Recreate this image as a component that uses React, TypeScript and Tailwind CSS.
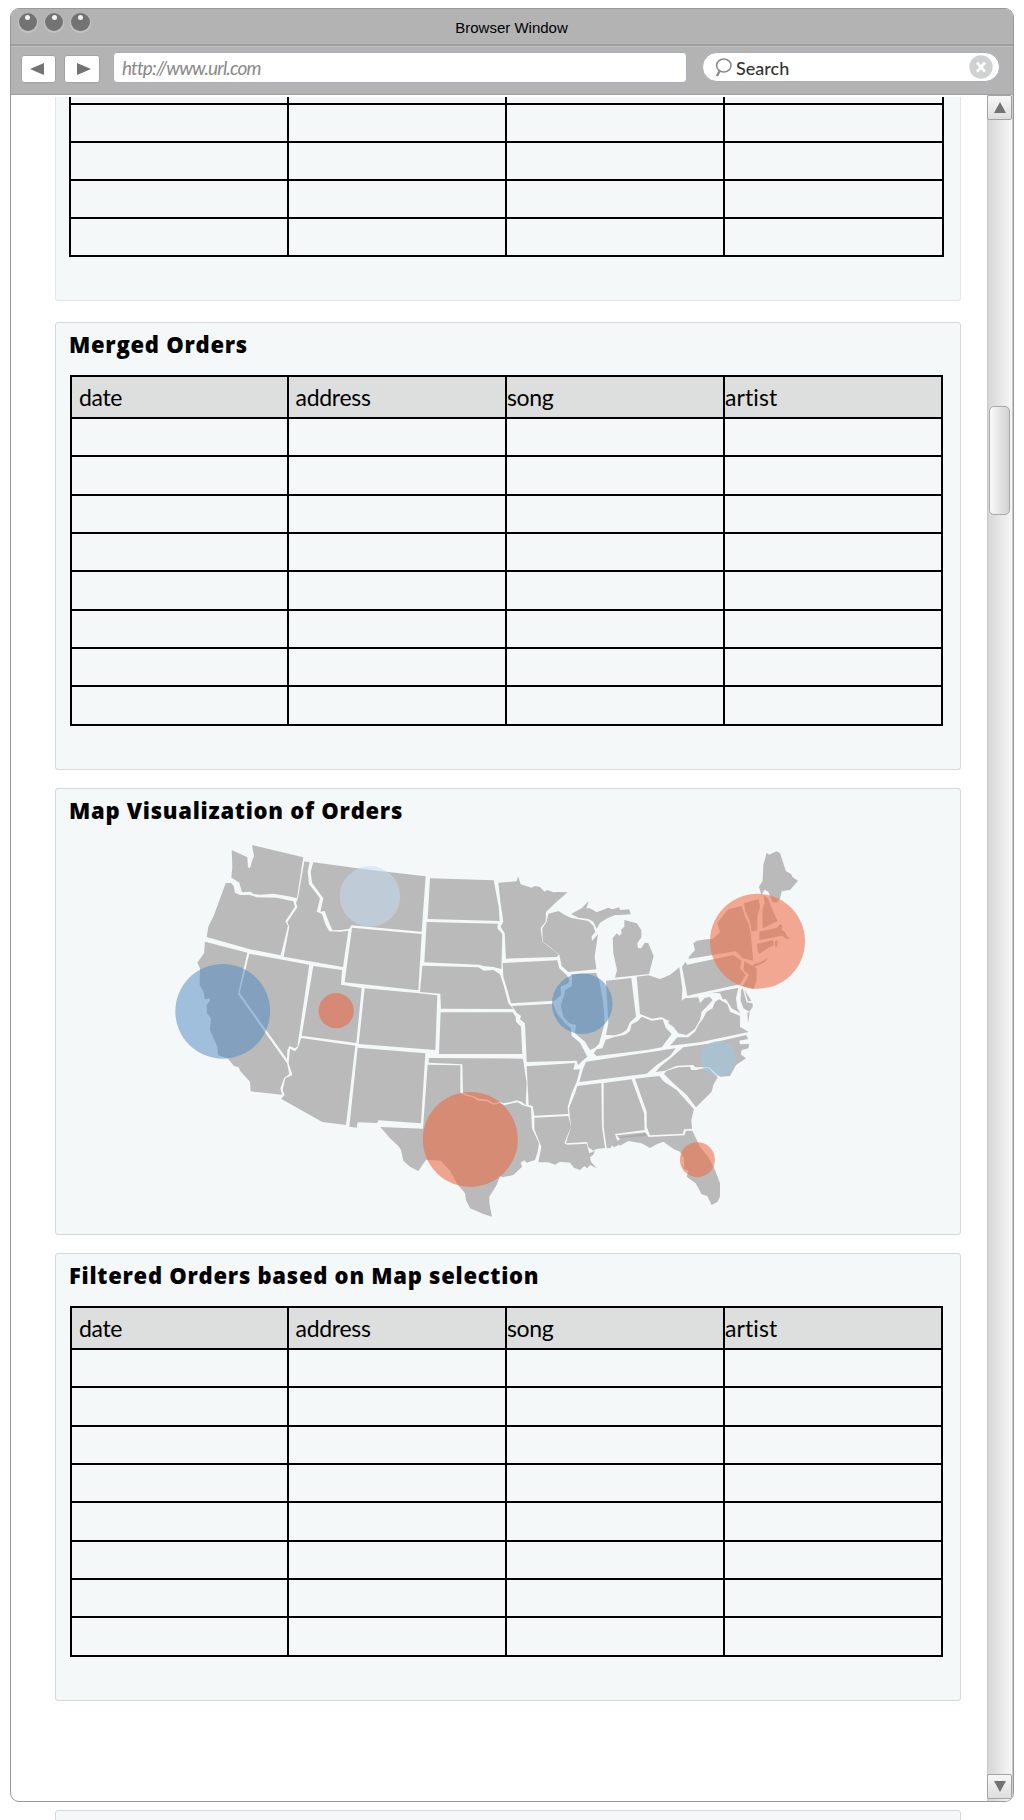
import React from "react";

const WEST = [
  "M215,60 L262,82 L264,112 L270,115 L277,90 L282,78 L276,45 L430,82 L425,112 L411,205 L385,199 L340,191 L300,194 L280,192 L272,185 L246,187 L238,158 L222,148 L214,143 L217,110Z",
  "M197,160 L212,158 L221,168 L225,188 L240,195 L270,195 L290,202 L350,203 L400,214 L405,230 L376,274 L384,288 L362,376 L270,358 L140,321 L145,290 L162,255Z",
  "M433,94 L449,97 L443,125 L447,162 L480,205 L470,245 L486,252 L497,285 L508,304 L540,305 L565,302 L549,411 L371,380 L388,290 L382,277 L412,232 L408,218 L414,205Z",
  "M460,97 L615,118 L797,139 L785,305 L574,286 L568,296 L545,300 L518,301 L510,285 L494,243 L481,245 L490,205 L456,158 L452,125Z",
  "M135,335 L262,368 L234,492 L381,700 L388,732 L372,745 L361,775 L366,794 L272,784 L270,755 L240,722 L236,712 L222,708 L203,685 L174,676 L172,650 L150,600 L153,565 L141,550 L140,525 L150,512 L148,505 L135,508 L130,485 L119,465 L120,415 L112,398 L132,370Z",
  "M268,371 L448,404 L412,650 L405,655 L388,648 L382,660 L381,688 L239,489Z",
  "M460,408 L546,420 L543,464 L605,474 L589,639 L425,617Z",
  "M424,624 L586,647 L558,885 L487,876 L363,806 L374,795 L368,780 L376,745 L397,735 L386,700 L390,656 L405,664 L413,655Z",
];
const PLAINS = [
  "M36,293 L245,312 L235,481 L14,457Z",
  "M74,475 L237,490 L292,496 L286,660 L56,642Z",
  "M53,653 L256,670 L243,880 L115,871 L112,879 L53,877 L50,893 L28,890Z",
  "M270,145 L461,151 L476,230 L479,273 L263,267Z",
  "M260,276 L474,281 L472,295 L487,312 L484,417 L460,411 L430,408 L418,404 L253,397Z",
  "M247,407 L415,412 L432,422 L460,420 L480,433 L492,470 L505,520 L520,537 L303,536 L301,491 L240,486Z",
  "M302,547 L518,547 L527,560 L528,575 L543,590 L547,672 L297,672Z",
  "M267,684 L549,686 L560,760 L557,826 L545,815 L530,811 L510,817 L490,820 L478,815 L460,820 L440,808 L418,806 L400,798 L385,795 L369,788 L367,703 L266,698Z",
  "M263,704 L361,706 L361,790 L380,798 L398,802 L415,812 L440,814 L460,824 L480,820 L493,826 L512,821 L532,817 L548,826 L573,833 L576,895 L597,940 L593,965 L585,990 L560,998 L553,991 L542,998 L546,1010 L520,1035 L487,1042 L480,1038 L470,1065 L448,1100 L448,1120 L456,1160 L430,1152 L390,1135 L378,1110 L375,1090 L350,1060 L330,1022 L302,992 L258,989 L235,1023 L210,1010 L190,992 L183,960 L175,948 L150,925 L121,891 L249,896Z",
  "M475,158 L530,154 L534,139 L542,163 L575,173 L585,168 L600,171 L614,185 L622,180 L640,187 L655,186 L683,187 L650,215 L618,246 L617,275 L602,293 L607,335 L640,360 L656,374 L650,381 L498,386 L494,310 L482,290 L490,275 L482,220Z",
];
const CENTRAL = [
  "M8,309 L172,301 L178,325 L200,345 L208,358 L205,370 L182,380 L183,405 L165,422 L33,430 L22,390 L10,350Z",
  "M36,438 L160,431 L170,460 L200,495 L212,503 L215,527 L240,548 L262,590 L246,604 L234,616 L230,602 L80,606 L75,490 L60,478 L63,468 L50,458Z",
  "M80,619 L225,609 L220,629 L240,628 L230,665 L215,700 L203,740 L205,762 L103,767 L98,738 L86,735Z",
  "M103,773 L205,768 L213,800 L193,850 L202,854 L260,851 L268,880 L285,872 L280,884 L270,892 L273,905 L290,925 L270,915 L262,925 L253,918 L240,930 L222,923 L210,908 L180,905 L165,914 L145,907 L115,907 L124,860 L103,808Z",
  "M145,161 L175,153 L200,168 L215,174 L265,183 L280,197 L286,217 L275,228 L276,243 L294,222 L284,290 L289,328 L205,336 L185,318 L178,285 L150,260 L128,245 L127,205 L140,185Z",
  "M213,162 L245,145 L266,123 L259,145 L270,145 L290,157 L325,143 L337,148 L358,142 L360,150 L388,148 L392,163 L360,165 L345,165 L322,175 L300,188 L290,206 L280,185 L265,177 L235,173Z",
  "M373,180 L410,190 L424,210 L424,232 L412,250 L414,264 L424,265 L434,248 L445,250 L461,288 L447,342 L345,353 L351,330 L340,280 L338,235 L350,220 L358,227 L365,220 L363,209 L373,200Z",
  "M212,343 L288,338 L298,362 L310,430 L314,490 L303,530 L297,552 L285,563 L270,570 L255,545 L225,520 L228,495 L208,490 L190,470 L182,435 L193,405 L195,390 L215,378 L217,355Z",
  "M318,362 L394,354 L408,470 L390,487 L380,509 L365,520 L345,526 L318,525 L325,490Z",
  "M410,350 L445,346 L480,357 L510,345 L538,322 L547,385 L545,425 L520,450 L515,465 L505,482 L485,472 L455,476 L420,462Z",
  "M290,588 L281,580 L290,568 L307,565 L317,539 L343,531 L375,524 L390,513 L395,493 L413,484 L425,470 L455,482 L488,478 L497,503 L515,522 L485,562 L440,570Z",
  "M258,605 L527,565 L510,588 L470,615 L440,641 L238,666 L248,630Z",
  "M232,678 L304,669 L306,800 L315,864 L290,867 L280,872 L265,862 L262,846 L198,850 L213,800 L207,745 L225,700Z",
  "M311,669 L395,658 L432,760 L434,810 L345,822 L356,855 L342,862 L336,856 L332,864 L320,865 L311,800Z",
  "M405,656 L478,648 L492,665 L530,690 L582,748 L574,780 L576,806 L552,808 L548,821 L450,826 L440,800 L440,755Z",
  "M350,826 L436,817 L446,831 L553,826 L558,812 L577,812 L600,860 L625,890 L645,930 L660,970 L660,1010 L652,1026 L635,1035 L622,1008 L605,1003 L587,970 L560,950 L566,932 L552,926 L552,895 L540,875 L522,868 L490,845 L470,853 L450,864 L425,850 L385,843 L360,857 L345,845 L360,838Z",
];
const EAST = [
  "M72,702 L80,692 L115,682 L150,680 L154,690 L168,690 L190,685 L205,684 L233,712 L220,735 L215,755 L168,802 L140,765 L100,730Z",
  "M47,696 L60,680 L95,652 L130,622 L205,611 L318,585 L325,597 L298,602 L300,613 L328,612 L325,625 L305,630 L302,643 L318,655 L288,675 L270,708 L240,710 L207,682 L165,682 L160,675 L110,677 L75,692Z",
  "M90,617 L112,592 L145,592 L165,575 L175,555 L188,538 L200,515 L218,505 L225,486 L237,478 L262,492 L270,515 L300,528 L300,560 L326,576 L180,607Z",
  "M85,550 L90,525 L105,500 L128,480 L135,475 L175,472 L180,490 L193,475 L208,470 L218,480 L200,500 L185,515 L180,540 L164,567 L140,585 L115,580 L100,560Z",
  "M126,380 L136,366 L142,374 L280,345 L305,362 L300,385 L317,405 L300,433 L142,467Z",
  "M160,310 L170,302 L200,298 L218,297 L240,277 L232,250 L248,228 L265,208 L305,198 L315,230 L325,248 L332,280 L340,362 L308,355 L287,334 L200,348 L145,357 L148,349 L165,330Z",
  "M338,374 L365,365 L386,351 L374,367 L343,381Z",
  "M200,463 L295,443 L288,475 L292,505 L302,520 L275,505 L258,478 L248,478 L240,460 L220,458Z",
  "M303,450 L308,445 L320,487 L338,490 L338,502 L328,515 L310,505 L302,482Z",
  "M313,447 L320,460 L334,483 L324,484Z",
  "M322,520 L329,515 L324,550Z",
  "M313,363 L350,385 L350,420 L341,447 L308,438 L327,405 L310,390Z",
  "M312,190 L356,177 L360,200 L352,233 L352,271 L335,275 L328,238 L316,215Z",
  "M370,165 L384,175 L400,215 L413,244 L368,265 L367,210 L374,185Z",
  "M380,38 L387,44 L410,34 L420,40 L438,94 L453,102 L458,112 L474,122 L450,150 L425,154 L420,176 L410,188 L397,187 L385,155 L374,149 L364,165 L357,140 L368,122 L370,75Z",
  "M358,275 L410,264 L420,252 L427,257 L425,270 L435,275 L442,290 L453,293 L440,298 L428,287 L410,290 L358,301Z",
  "M350,312 L398,300 L402,316 L378,328 L358,342 L354,335Z",
  "M404,304 L411,300 L413,315 L407,323Z",
];
const MAP_GROUPS = [
  { at: "translate(160 830) scale(0.33333)", states: WEST },
  { at: "translate(340 830) scale(0.33333)", states: PLAINS },
  { at: "translate(500 860) scale(0.33333)", states: CENTRAL },
  { at: "translate(640 840) scale(0.33333)", states: EAST },
];
const BUBBLES = [
  { x: 222.7, y: 1011.3, r: 47.4, fill: "#508bc1", o: 0.52 },
  { x: 370, y: 896.4, r: 30.3, fill: "#c4dcf1", o: 0.5 },
  { x: 336.2, y: 1010.7, r: 17.6, fill: "#e66a48", o: 0.62 },
  { x: 582.2, y: 1003.7, r: 30.3, fill: "#508bc1", o: 0.55 },
  { x: 470.3, y: 1139.4, r: 47.5, fill: "#ea6d48", o: 0.6 },
  { x: 757.5, y: 941.3, r: 47.5, fill: "#ee714b", o: 0.6 },
  { x: 718.4, y: 1058.4, r: 17.5, fill: "#9acae6", o: 0.5 },
  { x: 697.4, y: 1159.7, r: 17.5, fill: "#ec6f49", o: 0.6 },
];

function OrdersMap() {
  return (
    <svg className="block h-[400px] w-[680px]" viewBox="160 830 680 400">
      {MAP_GROUPS.map((g) => (
        <g key={g.at} transform={g.at} fill="#bababa" strokeLinejoin="round">
          {g.states.map((d) => (
            <path key={d} d={d} />
          ))}
        </g>
      ))}
      <path d="M618 1137.2 L646 1133.3 V1136 L620 1138Z" fill="#a9a9a9" />
      {BUBBLES.map((b) => (
        <circle key={b.x} cx={b.x} cy={b.y} r={b.r} fill={b.fill} fillOpacity={b.o} />
      ))}
    </svg>
  );
}

const HEADERS = [
  { label: "date", cls: "pl-[7px] tracking-[-0.35px]" },
  { label: "address", cls: "pl-[6.5px] tracking-[-0.3px]" },
  { label: "song", cls: "pl-0 tracking-[-0.35px]" },
  { label: "artist", cls: "pl-0 tracking-[0.1px]" },
];

function Rows({ count }: { count: number }) {
  return (
    <>
      {Array.from({ length: count * 4 }, (_, i) => (
        <div key={i} className="border-r-2 border-b-2 border-black" />
      ))}
    </>
  );
}

function OrdersTable() {
  return (
    <div className="grid w-[873px] grid-cols-[217px_218px_218px_218px] grid-rows-[42px_repeat(8,38.35px)] border-t-2 border-l-2 border-black">
      {HEADERS.map((h) => (
        <div
          key={h.label}
          className={`border-r-2 border-b-2 border-black bg-[#dddfde] pt-[6px] text-[23px] leading-[28px] ${h.cls}`}
        >
          {h.label}
        </div>
      ))}
      <Rows count={8} />
    </div>
  );
}

function Panel({ title, cls, children }: { title: string; cls: string; children: React.ReactNode }) {
  return (
    <section className={`ml-[44px] w-[906px] shrink-0 rounded-[3px] border border-[#d5d9d9] bg-[#f4f8f9] pl-[14px] ${cls}`}>
      <h2 className="-ml-px h-[52px] pt-[6px] font-['Open_Sans',sans-serif] text-[22px] leading-[30px] font-extrabold tracking-[0.74px] whitespace-nowrap">
        {title}
      </h2>
      {children}
    </section>
  );
}

function ScrollButton({ down }: { down?: boolean }) {
  return (
    <div className="flex h-[25px] w-[25px] shrink-0 items-center justify-center rounded-[2px] border border-[#a3a3a3] bg-gradient-to-b from-[#f7f7f7] to-[#dedede]">
      <svg className="h-[11px] w-[12px]" viewBox="0 0 12 11">
        <path d={down ? "M0 0H12L6 11Z" : "M6 0L12 11H0Z"} fill="#737373" />
      </svg>
    </div>
  );
}

function NavButton({ d, cls }: { d: string; cls: string }) {
  return (
    <div className={`flex h-[28px] items-center justify-center rounded-[3px] border border-[#a3a3a3] bg-white ${cls}`}>
      <svg className="h-[12px] w-[14px]" viewBox="0 0 14 12">
        <path d={d} fill="#737373" />
      </svg>
    </div>
  );
}

export default function App() {
  return (
    <div className="flex h-[1820px] w-[1024px] flex-col overflow-hidden bg-white pt-[8px] pl-[10px] font-['Lato',sans-serif] text-black">
      <div className="flex h-[1794px] w-[1004px] shrink-0 flex-col overflow-hidden rounded-[9px] border border-[#999999] bg-white">
        <div className="grid h-[37px] shrink-0 grid-cols-[1fr_auto_1fr] border-b-2 border-[#9e9e9e] bg-[#b3b3b3]">
          <div className="flex gap-[8px] pt-[4px] pl-[7.5px]">
            {[0, 1, 2].map((i) => (
              <div key={i} className="flex h-[17.5px] w-[18.4px] justify-center rounded-full bg-[#737373] pt-[2px] shadow-[0_1px_1px_1px_#c4c4c4]">
                <span className="h-[5px] w-[5px] rounded-full bg-[#f2f2f2]" />
              </div>
            ))}
          </div>
          <div className="pt-[10px] pr-[1px] font-['Liberation_Sans',sans-serif] text-[15px] leading-[18px]">Browser Window</div>
        </div>
        <div className="flex h-[49px] shrink-0 border-t border-b border-t-[#c2c2c2] border-b-[#a0a0a0] bg-[#b3b3b3] pl-[10px]">
          <NavButton cls="mt-[8px] w-[35px] pr-[3px]" d="M0 6L14 0V12Z" />
          <NavButton cls="mt-[8px] ml-[8px] w-[36px] pl-[3px]" d="M14 6L0 0V12Z" />
          <div className="mt-[5px] ml-[13px] h-[31px] w-[574px] rounded-[4px] border border-[#a9afba] bg-white pl-[8px] text-[19px] leading-[30px] tracking-[-0.85px] text-[#8a8a8a] italic">
            http://www.url.com
          </div>
          <div className="mt-[5px] ml-[15px] flex h-[30px] w-[298px] items-center rounded-full border border-[#a9afba] bg-white pr-[6px] pl-[12px]">
            <svg className="h-[19px] w-[17px]" viewBox="0 0 17 19" fill="none" stroke="#8c8c8c">
              <ellipse cx="8.8" cy="7.5" rx="7.2" ry="6.5" strokeWidth="1.6" />
              <path d="M4.8 13L1.8 18" strokeWidth="2.4" />
            </svg>
            <span className="ml-[4px] flex-1 pt-[1px] text-[18px] leading-[28px] font-medium text-[#333333]">Search</span>
            <svg className="h-[24px] w-[24px]" viewBox="0 0 24 24">
              <circle cx="12" cy="12" r="11.7" fill="#d0d1d1" />
              <path d="M8 7.6L16 16.6M16 7.6L8 16.6" stroke="#fff" strokeWidth="2.8" />
            </svg>
          </div>
        </div>
        <div className="flex min-h-0 flex-1">
          <div className="flex w-[976px] shrink-0 flex-col pt-[2px]">
            <section className="ml-[44px] h-[204px] w-[906px] shrink-0 rounded-b-[3px] border border-t-0 border-[#e2e6e6] bg-[#f4f8f9] pl-[13px]">
              <div className="grid w-[875px] grid-cols-[218px_218px_218px_219px] grid-rows-[8px_repeat(4,38px)] border-l-2 border-black">
                <Rows count={5} />
              </div>
            </section>
            <Panel title="Merged Orders" cls="mt-[21px] h-[448px]">
              <OrdersTable />
            </Panel>
            <Panel title="Map Visualization of Orders" cls="mt-[18px] h-[447px]">
              <div className="-mt-[11px] pl-[90px]">
                <OrdersMap />
              </div>
            </Panel>
            <Panel title="Filtered Orders based on Map selection" cls="mt-[18px] h-[448px]">
              <OrdersTable />
            </Panel>
          </div>
          <div className="flex w-[26px] flex-col border-x border-[#c9c9c9] bg-gradient-to-r from-[#d6d6d6] to-[#f7f7f7]">
            <div className="-ml-px">
              <ScrollButton />
            </div>
            <div className="mt-[286px] ml-[1px] h-[109px] w-[21px] rounded-[5px] border border-[#a8a8a8] bg-gradient-to-r from-[#fafafa] to-[#d2d2d2]" />
            <div className="mt-auto mb-[2px] -ml-px">
              <ScrollButton down />
            </div>
          </div>
        </div>
      </div>
      <section className="mt-[8px] ml-[45px] h-[40px] w-[906px] shrink-0 rounded-[3px] border border-[#d5d9d9] bg-[#f4f8f9]" />
    </div>
  );
}
